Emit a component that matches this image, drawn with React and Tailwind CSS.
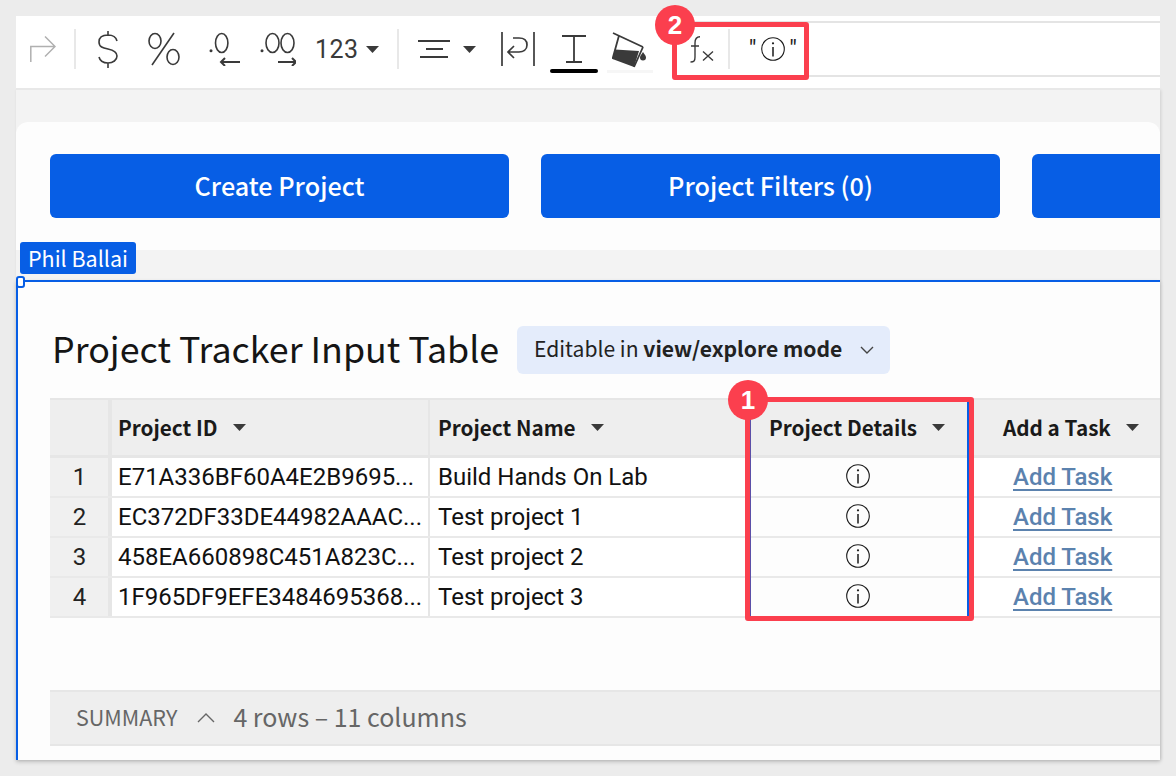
import React from 'react'

const rows = [
  ['1', 'E71A336BF60A4E2B9695...', 'Build Hands On Lab'],
  ['2', 'EC372DF33DE44982AAAC...', 'Test project 1'],
  ['3', '458EA660898C451A823C...', 'Test project 2'],
  ['4', '1F965DF9EFE3484695368...', 'Test project 3'],
]

const sans = "font-['Noto_Sans_CJK_SC',sans-serif]"
const roboto = "font-['Roboto',sans-serif]"
const cols = 'grid grid-cols-[62px_318px_318px_220px_1fr]'

function Caret({ className = '' }) {
  return (
    <svg width="13" height="7" viewBox="0 0 13 7" className={`shrink-0 ${className}`}>
      <path d="M0 0h13L6.500 7z" fill="#3a3a3a" />
    </svg>
  )
}

function Sep() {
  return <div className="w-[2px] h-10 bg-[#e8e8e8] shrink-0" />
}

function Badge({ n, className }) {
  return (
    <div className={`absolute w-10 h-10 rounded-full bg-[#fb3f4e] text-white flex items-center justify-center text-[26px] font-bold font-['Liberation_Sans',sans-serif] ${className}`}>
      {n}
    </div>
  )
}

function InfoGlyph({ size = 24 }) {
  return (
    <svg width={size} height={size} viewBox="0 0 24 24" fill="none" stroke="#1a1a1a" strokeWidth="1.1" className="shrink-0">
      <circle cx="12" cy="12" r="11.300" />
      <circle cx="12" cy="6.300" r="1.100" fill="#1a1a1a" stroke="none" />
      <path d="M12 10v9.500" strokeWidth="1.500" />
    </svg>
  )
}

function Toolbar() {
  return (
    <div className="relative h-[74px] mt-4 ml-4 pb-[6px] bg-white border-b-2 border-[#e8e8e8] flex items-center text-[#3a3a3a]">
      <svg width="26" height="27" viewBox="0 0 26 27" className="ml-[14px] shrink-0" fill="none" stroke="#b0b0b0" strokeWidth="1.500">
        <path d="M0.800 26V10.500H25M15 0.500l10 10-10 10" />
      </svg>
      <div className="ml-[18px]"><Sep /></div>
      <svg width="22" height="37" viewBox="0 0 22 37" className="ml-[21px] shrink-0" fill="none" stroke="#3a3a3a" strokeWidth="1.600">
        <path d="M11 0v5M11 32v5M20 10c-1-4-4-6-9-6s-9 2-9 7 4 6 9 7 9 3 9 7-4 7-9 7-8-2-9-6" />
      </svg>
      <svg width="34" height="34" viewBox="0 0 34 34" className="ml-[28px] shrink-0" fill="none" stroke="#3a3a3a" strokeWidth="1.600">
        <ellipse cx="8" cy="9" rx="6" ry="7.500" />
        <ellipse cx="26" cy="25" rx="6" ry="7.500" />
        <path d="M27 1 5 33" />
      </svg>
      <svg width="32" height="34" viewBox="0 0 32 34" className="ml-[28px] shrink-0" fill="none" stroke="#3a3a3a" strokeWidth="1.600">
        <circle cx="2" cy="18.700" r="1.500" fill="#3a3a3a" stroke="none" />
        <ellipse cx="12.700" cy="11" rx="6.200" ry="9.500" />
        <path d="M31 30H12M16 26l-4 4 4 4" strokeWidth="2" />
      </svg>
      <svg width="36" height="34" viewBox="0 0 36 34" className="ml-[19px] shrink-0" fill="none" stroke="#3a3a3a" strokeWidth="1.600">
        <circle cx="2" cy="18.700" r="1.500" fill="#3a3a3a" stroke="none" />
        <ellipse cx="12.500" cy="11" rx="6.500" ry="9.500" />
        <ellipse cx="27.500" cy="11" rx="6.500" ry="9.500" />
        <path d="M18 30h17M32 26l4 4-4 4" strokeWidth="2" />
      </svg>
      <span className={`ml-[19px] text-[25px] leading-none tracking-[0.5px] ${roboto}`}>123</span>
      <Caret className="ml-[7px]" />
      <div className="ml-[18px]"><Sep /></div>
      <svg width="32" height="18" viewBox="0 0 32 18" className="ml-[19px] shrink-0" fill="none" stroke="#3a3a3a" strokeWidth="1.800">
        <path d="M0 1h32M8 9h17M2 17h28" />
      </svg>
      <Caret className="ml-[13px]" />
      <svg width="34" height="34" viewBox="0 0 34 34" className="ml-[25px] shrink-0" fill="none" stroke="#3a3a3a" strokeWidth="1.700">
        <path d="M1 0v34M33 0v34M7 20h11c4 0 8-2 8-7s-3-7-8-7h-6M13 14l-6 6 6 6" />
      </svg>
      <div className="ml-[15px] w-12 h-[38px] flex flex-col items-center justify-between relative top-[5px] shrink-0">
        <svg width="26" height="28" viewBox="0 0 26 28" fill="none" stroke="#3a3a3a" strokeWidth="1.800">
          <path d="M1 1h24M13 1v26M5 27h16" />
        </svg>
        <div className="w-12 h-1 bg-black rounded-[2px]" />
      </div>
      <div className="ml-[9px] w-[46px] h-[41px] flex flex-col items-center justify-between relative top-[3px] shrink-0">
        <svg width="36" height="36" viewBox="0 0 36 36">
          <path d="M1 1 31 15M7 3.500 0.500 27M31 15l-9 20" stroke="#3a3a3a" strokeWidth="1.800" fill="none" />
          <path d="M3 17.500 27 19 22 35 0.500 27z" fill="#3a3a3a" />
          <path d="M31 20c2 3 3 4 3 5.500a3 3 0 0 1-6 0c0-1.500 1-2.500 3-5.500z" fill="#3a3a3a" />
        </svg>
        <div className="w-[46px] h-[3px] bg-[#f6f6f6]" />
      </div>
      <div className="ml-[19px] flex-1 h-14 border-y-2 border-[#e4e4e4] flex items-center">
        <svg width="24" height="27" viewBox="0 0 24 27" className="ml-[18px] shrink-0" fill="none" stroke="#3a3a3a" strokeWidth="1.400">
          <path d="M10 0.800C6 0.800 5 3 5 7v14c0 4-1 5-4.500 5M1 10h8M13 15.500l10 9M23 15.500l-10 9" />
        </svg>
        <div className="ml-[14px]"><Sep /></div>
        <span className={`ml-[19px] text-[#222] text-[24px] leading-none flex items-center ${roboto}`}>
          <span className="mr-[5px]">"</span>
          <InfoGlyph size={24} />
          <span className="ml-[4px]">"</span>
        </span>
      </div>
      <div className="absolute left-[656px] top-[6px] w-[137px] h-[58px] border-[5px] border-[#fb3f4e] rounded-[3px]" />
      <Badge n="2" className="left-[639px] top-[-11px]" />
    </div>
  )
}

function Head({ children, className = '' }) {
  return (
    <div className={`bg-[#eeeeee] flex items-center font-semibold text-[20.7px] text-[#1a1a1a] whitespace-nowrap ${sans} ${className}`}>
      {children}
    </div>
  )
}

function ActionButton({ children, className = '' }) {
  return (
    <div className={`h-16 rounded-[6px] bg-[#075ee5] text-white flex items-center justify-center text-[25.2px] font-medium shrink-0 ${sans} ${className}`}>
      {children}
    </div>
  )
}

function Table() {
  return (
    <div className="relative mt-6 ml-8 text-[#111]">
      <div className={`${cols} h-[60px] border-t-2 border-b-[3px] border-[#e6e6e6]`}>
        <Head className="border-r-[4px] border-[#e6e6e6]" />
        <Head className="pl-[6px] gap-[15px] border-r-2 border-[#e6e6e6]">Project ID <Caret /></Head>
        <Head className="pl-2 gap-[15px]">Project Name <Caret /></Head>
        <Head className="pl-[21px] gap-[15px]">Project Details <Caret /></Head>
        <Head className="pl-[35px] gap-[15px]">Add a Task <Caret /></Head>
      </div>
      {rows.map((r) => (
        <div key={r[0]} className={`${cols} h-10 border-b-2 border-[#e9e9e9] text-[24px] ${roboto}`}>
          <div className="bg-[#f0f0f0] border-r-[4px] border-[#e6e6e6] flex items-center justify-center pl-[1px] text-[#222]">{r[0]}</div>
          <div className="bg-white pl-[6px] flex items-center border-r-2 border-[#e6e6e6] whitespace-nowrap overflow-hidden">{r[1]}</div>
          <div className="bg-white pl-2 flex items-center whitespace-nowrap">{r[2]}</div>
          <div className="flex items-center justify-center pb-[2px]"><InfoGlyph /></div>
          <div className="flex items-center pl-[45px] bg-white">
            <span className="text-[#5b82ae] font-medium underline decoration-2 underline-offset-[4px]">Add Task</span>
          </div>
        </div>
      ))}
      <div className="absolute left-[695px] top-[-1px] w-[229px] h-[224px] border-[5px] border-[#fb3f4e] rounded-[3px]">
        <div className="absolute left-0 top-0 bottom-0 w-[1px] bg-[#5b4fa8]" />
        <div className="absolute right-0 top-0 bottom-0 w-[2px] bg-[#075ee5]" />
      </div>
      <Badge n="1" className="left-[678px] top-[-18px]" />
    </div>
  )
}

export default function App() {
  return (
    <div className="w-[1176px] h-[776px] bg-[#ececec] overflow-hidden relative">
      <div className="w-[1160px]">
        <Toolbar />
        <div className="ml-4 h-[670px] bg-[#f3f3f3] pt-8 shadow-[1px_0_3px_rgba(0,0,0,0.12)]">
          <div className="rounded-t-[12px] bg-[#fdfdfd] h-32 flex gap-8 pl-[34px] pt-8 overflow-hidden">
            <ActionButton className="w-[459px]">Create Project</ActionButton>
            <ActionButton className="w-[459px]">Project Filters (0)</ActionButton>
            <ActionButton className="w-[200px]" />
          </div>
          <div className="h-[30px] relative">
            <div className={`absolute left-1 top-[-8px] h-8 w-[116px] pl-2 rounded-[3px] bg-[#075ee5] text-white text-[21.5px] flex items-center ${sans}`}>
              Phil Ballai
            </div>
          </div>
          <div className="relative h-[480px] bg-[#fdfdfd] border-l-2 border-t-2 border-[#075ee5] shadow-[0_2px_4px_rgba(0,0,0,0.18)]">
            <div className="absolute left-[-2px] top-[-6px] w-[9px] h-3 bg-white border-2 border-[#075ee5] rounded-[3px]" />
            <div className="pt-11 pl-[34px] flex items-center">
              <h1 className={`w-[447px] text-[35.8px] leading-[48px] text-[#151515] whitespace-nowrap relative top-[-3px] ${sans}`}>Project Tracker Input Table</h1>
              <div className={`ml-[18px] h-12 w-[373px] rounded-[6px] bg-[#e4ecfb] flex items-center pl-[17px] text-[21.1px] text-[#222] whitespace-nowrap ${sans}`}>
                <span className="relative top-[-1px]">Editable in <b className="font-semibold">view/explore mode</b></span>
                <svg width="14" height="8" viewBox="0 0 14 8" className="ml-[18px] shrink-0" fill="none" stroke="#444" strokeWidth="1.400">
                  <path d="M1 1l6 6 6-6" />
                </svg>
              </div>
            </div>
            <Table />
            <div className={`ml-8 mt-[72px] h-14 bg-[#eeeeee] border-y-2 border-[#e6e6e6] flex items-center pl-[26px] pb-[2px] text-[#666] ${sans}`}>
              <span className="text-[21.5px]">SUMMARY</span>
              <svg width="18" height="11" viewBox="0 0 18 11" className="ml-5 shrink-0" fill="none" stroke="#666" strokeWidth="1.400">
                <path d="M1 10l8-8 8 8" />
              </svg>
              <span className="ml-[18px] text-[25px]">4 rows – 11 columns</span>
            </div>
          </div>
        </div>
      </div>
    </div>
  )
}
